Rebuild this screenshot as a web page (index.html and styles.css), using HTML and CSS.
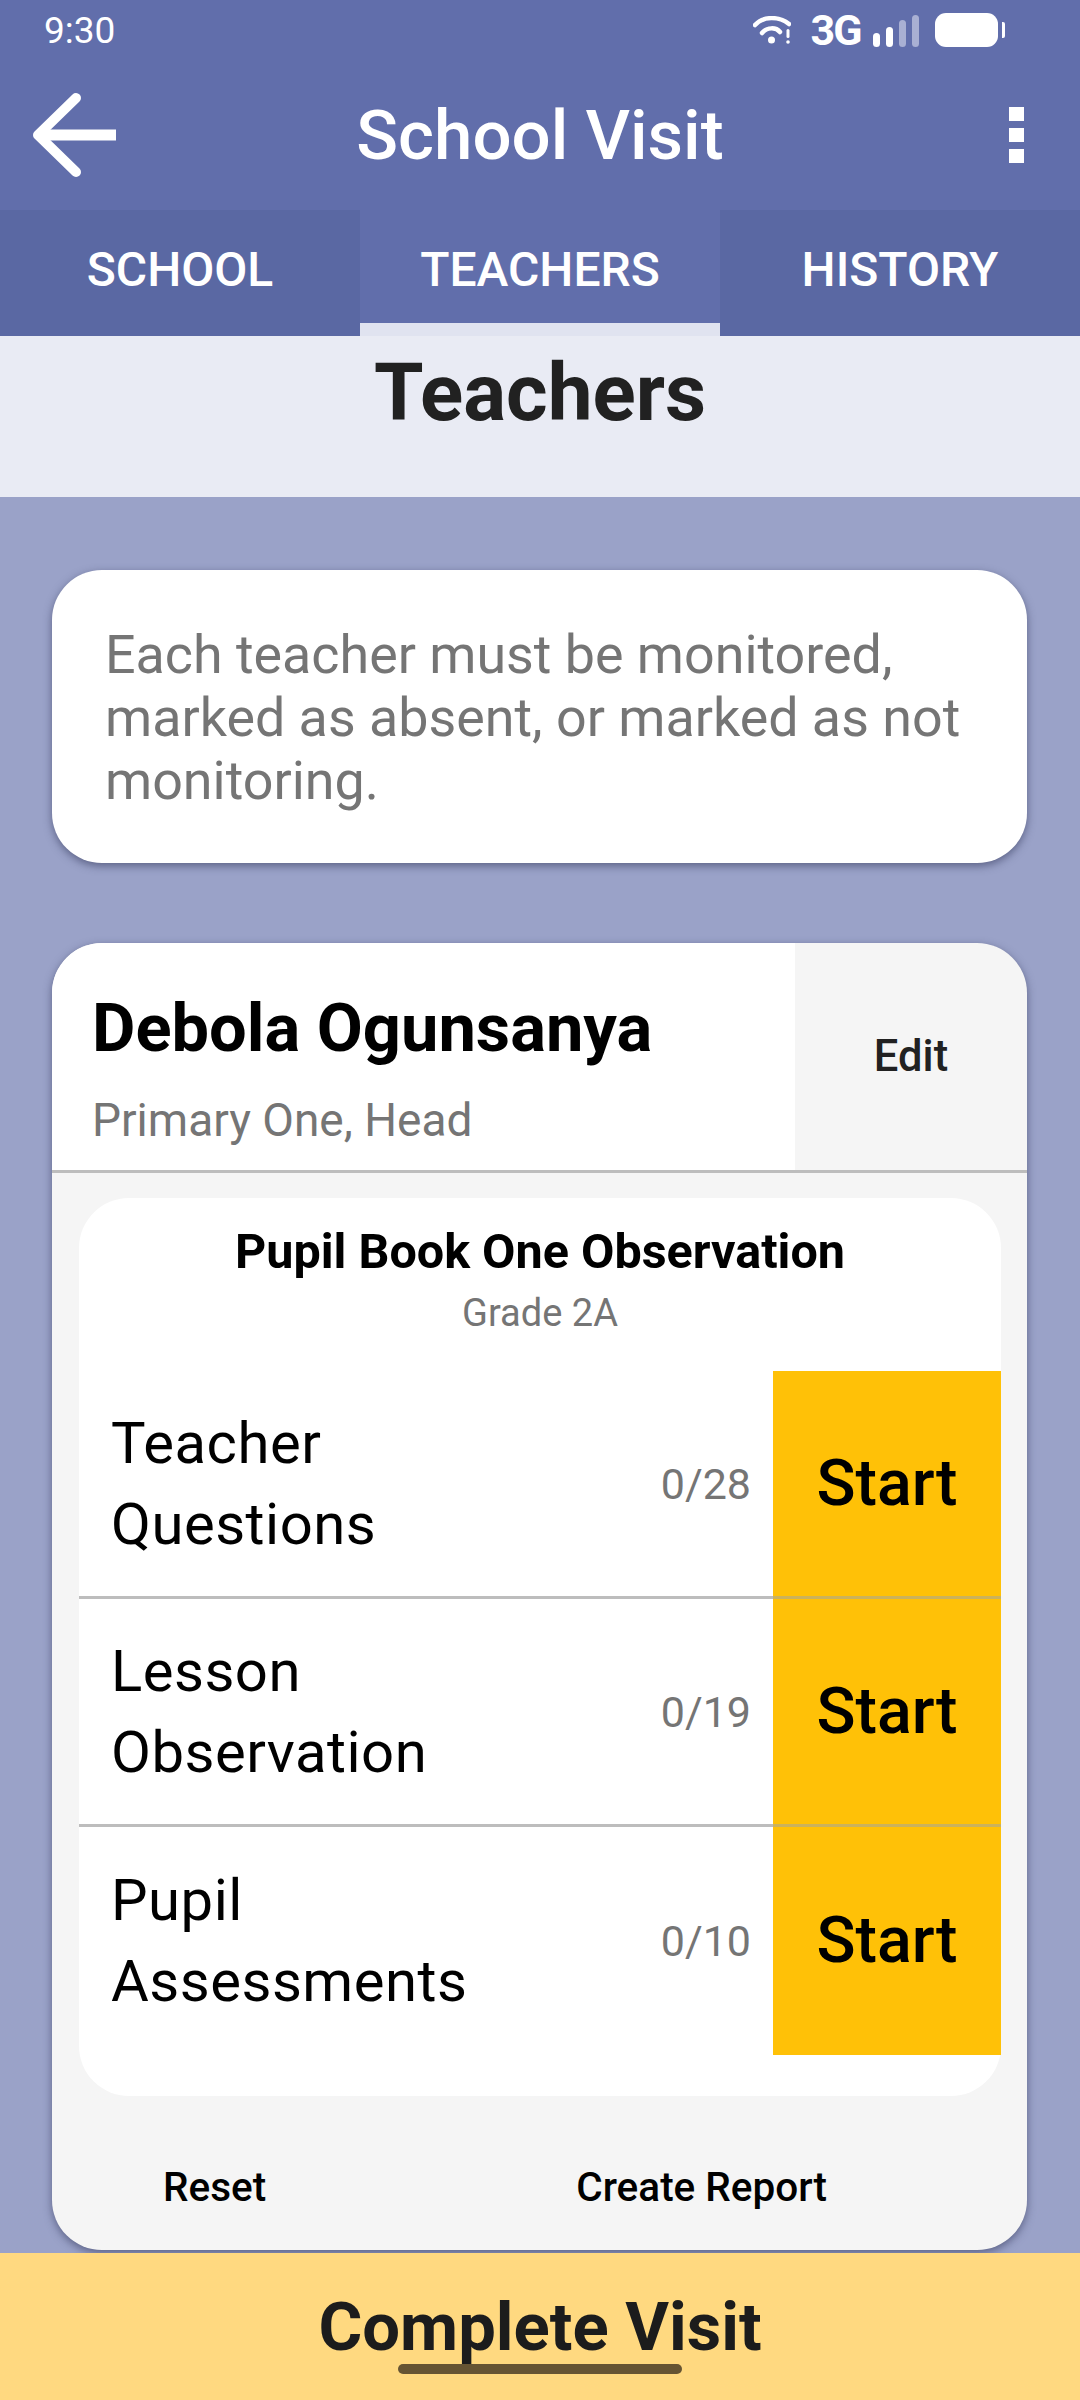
FILE: index.html
```html
<!DOCTYPE html>
<html lang="en">
<head>
    <meta charset="UTF-8">
    <meta name="viewport" content="width=device-width, initial-scale=1.0">
    <title>School Visit</title>
    <link rel="stylesheet" href="styles.css">
</head>
<body>
    <div class="top-bars">
        <div class="status-bar">
            <span class="clock">9:30</span>
            <div class="status-icons">
                <svg class="wifi" width="38" height="28" viewBox="0 0 38 28">
                    <path d="M2 9 C10 0 26 0 36 8" fill="none" stroke="#fff" stroke-width="4.5" stroke-linecap="round"/>
                    <path d="M9 17 C14 11 23 11 27 16" fill="none" stroke="#fff" stroke-width="4.5" stroke-linecap="round"/>
                    <circle cx="18.5" cy="24" r="3.5" fill="#fff"/>
                    <rect x="33.5" y="13" width="3" height="9" rx="1.5" fill="#fff"/>
                    <circle cx="35" cy="26" r="1.8" fill="#fff"/>
                </svg>
                <span class="network">3G</span>
                <div class="signal">
                    <span class="bar bar-1"></span>
                    <span class="bar bar-2"></span>
                    <span class="bar bar-3 off"></span>
                    <span class="bar bar-4 off"></span>
                </div>
                <div class="battery"><span class="battery-body"></span><span class="battery-nub"></span></div>
            </div>
        </div>

        <div class="app-bar">
            <svg class="back" width="92" height="86" viewBox="0 0 92 86">
                <path d="M48 6 L10 43 L48 80" fill="none" stroke="#fff" stroke-width="10" stroke-linecap="round" stroke-linejoin="round"/>
                <path d="M10 43 H88" fill="none" stroke="#fff" stroke-width="11"/>
            </svg>
            <h1 class="app-title">School Visit</h1>
            <div class="more"><span></span><span></span><span></span></div>
        </div>

        <div class="tabs">
            <div class="tab">SCHOOL</div>
            <div class="tab active">TEACHERS</div>
            <div class="tab">HISTORY</div>
        </div>
    </div>

    <div class="page-head">
        <h2 class="page-title">Teachers</h2>
    </div>

    <main class="content">
        <div class="note">Each teacher must be monitored, marked as absent, or marked as not monitoring.</div>

        <section class="teacher">
            <div class="teacher-head">
                <div class="teacher-info">
                    <div class="teacher-name">Debola Ogunsanya</div>
                    <div class="teacher-role">Primary One, Head</div>
                </div>
                <div class="edit-btn">Edit</div>
            </div>

            <div class="observation">
                <div class="obs-title">Pupil Book One Observation</div>
                <div class="obs-grade">Grade 2A</div>

                <div class="task">
                    <div class="task-name">Teacher<br>Questions</div>
                    <div class="task-count">0/28</div>
                    <div class="start-btn">Start</div>
                </div>
                <div class="task">
                    <div class="task-name">Lesson<br>Observation</div>
                    <div class="task-count">0/19</div>
                    <div class="start-btn">Start</div>
                </div>
                <div class="task">
                    <div class="task-name">Pupil<br>Assessments</div>
                    <div class="task-count">0/10</div>
                    <div class="start-btn">Start</div>
                </div>
            </div>

            <div class="teacher-actions">
                <span class="action action-reset">Reset</span>
                <span class="action action-report">Create Report</span>
            </div>
        </section>
    </main>

    <footer class="complete-bar">
        <span class="complete-label">Complete Visit</span>
        <span class="home-pill"></span>
    </footer>
</body>
</html>
```

FILE: styles.css
```css
* {
    box-sizing: border-box;
    margin: 0;
    padding: 0;
}

body {
    width: 1080px;
    height: 2400px;
    overflow: hidden;
    display: flex;
    flex-direction: column;
    background: #9aa2c8;
    font-family: "Roboto", "Liberation Sans", sans-serif;
}

.top-bars {
    background: #616eab;
    color: #ffffff;
}

/* Status bar */
.status-bar {
    height: 60px;
    padding: 0 75px 0 44px;
    display: flex;
    align-items: center;
    justify-content: space-between;
}

.clock {
    font-size: 37px;
}

.status-icons {
    display: flex;
    align-items: center;
}

.network {
    margin-left: 20px;
    font-size: 43px;
    font-weight: 700;
    letter-spacing: -2px;
    line-height: 1;
    width: 46px;
}

.signal {
    margin-left: 16px;
    margin-top: 2px;
    display: flex;
    align-items: flex-end;
    gap: 5.5px;
    height: 32px;
}

.bar {
    width: 7.5px;
    border-radius: 4px;
    background: #ffffff;
}

.bar.off {
    background: #a9b0d3;
}

.bar-1 { height: 14px; }
.bar-2 { height: 20px; }
.bar-3 { height: 27px; }
.bar-4 { height: 32px; }

.battery {
    margin-left: 16px;
    display: flex;
    align-items: center;
    gap: 4px;
}

.battery-body {
    width: 63px;
    height: 34px;
    border-radius: 11px;
    background: #ffffff;
}

.battery-nub {
    width: 3px;
    height: 16px;
    border-radius: 0 2px 2px 0;
    background: #ffffff;
}

/* App bar */
.app-bar {
    height: 150px;
    padding: 0 56px 0 28px;
    display: flex;
    align-items: center;
    justify-content: space-between;
    position: relative;
}

.back {
    flex: none;
}

.app-title {
    position: absolute;
    left: 0;
    right: 0;
    text-align: center;
    font-size: 69px;
    font-weight: 500;
}

.more {
    display: flex;
    flex-direction: column;
    gap: 7px;
}

.more span {
    width: 15px;
    height: 14px;
    background: #ffffff;
}

/* Tabs */
.tabs {
    display: flex;
    height: 126px;
}

.tab {
    flex: 1;
    display: flex;
    align-items: center;
    justify-content: center;
    padding-bottom: 8px;
    background: #5a68a3;
    font-size: 48px;
    font-weight: 500;
}

.tab.active {
    background: #616eab;
    border-bottom: 13px solid #e0e3f0;
    padding-top: 6px;
    padding-bottom: 0;
}

/* Heading under the tabs */
.page-head {
    height: 161px;
    padding-top: 12px;
    background: #e9ebf4;
    text-align: center;
}

.page-title {
    font-size: 80px;
    font-weight: 700;
    color: #212121;
    line-height: 90px;
}

.content {
    flex: 1;
    min-height: 0;
    padding: 73px 53px 0 52px;
}

.note {
    height: 293px;
    padding: 53px 40px 0 53px;
    background: #ffffff;
    border-radius: 50px;
    box-shadow: 0 3px 8px rgba(50, 55, 90, 0.6);
    color: #757575;
    font-size: 53.8px;
    line-height: 63px;
}

/* Teacher card */
.teacher {
    margin-top: 80px;
    height: 1307px;
    background: #f5f5f5;
    border-radius: 50px;
    overflow: hidden;
    box-shadow: 0 3px 8px rgba(50, 55, 90, 0.6);
}

.teacher-head {
    display: flex;
    height: 230px;
    border-bottom: 3px solid #bdbdbd;
}

.teacher-info {
    flex: 1;
    padding: 50px 0 0 40px;
    background: #ffffff;
}

.teacher-name {
    font-size: 66.8px;
    font-weight: 700;
    line-height: 70px;
    color: #000000;
}

.teacher-role {
    margin-top: 31px;
    font-size: 46px;
    line-height: 52px;
    color: #757575;
}

.edit-btn {
    width: 232px;
    display: flex;
    align-items: center;
    justify-content: center;
    font-size: 43.5px;
    font-weight: 500;
    color: #212121;
}

.observation {
    margin: 25px 26px 0 27px;
    height: 898px;
    padding-top: 27px;
    background: #ffffff;
    border-radius: 50px;
}

.obs-title {
    text-align: center;
    font-size: 48.5px;
    font-weight: 700;
    line-height: 54px;
    color: #000000;
}

.obs-grade {
    margin-top: 14px;
    margin-bottom: 38px;
    text-align: center;
    font-size: 38px;
    line-height: 40px;
    color: #757575;
}

.task {
    display: flex;
    align-items: center;
    height: 228px;
    border-bottom: 3px solid #bdbdbd;
}

.task:last-child {
    border-bottom: 0;
}

.task-name {
    flex: 1;
    padding-left: 32px;
    font-size: 58px;
    line-height: 81px;
    letter-spacing: 0.5px;
    color: #000000;
}

.task-count {
    margin-right: 22px;
    font-size: 43px;
    color: #757575;
}

.start-btn {
    width: 228px;
    height: 228px;
    display: flex;
    align-items: center;
    justify-content: center;
    align-self: flex-start;
    padding-bottom: 2px;
    background: #ffc107;
    border-bottom: 3px solid #cbb25c;
    font-size: 64.5px;
    font-weight: 500;
    color: #000000;
}

.task:last-child .start-btn {
    border-bottom: 0;
}

.teacher-actions {
    display: flex;
    padding-top: 67px;
    font-size: 40.5px;
    font-weight: 500;
    color: #000000;
}

.action-reset {
    margin-left: 111px;
}

.action-report {
    margin-left: 310px;
}

/* Bottom button */
.complete-bar {
    height: 147px;
    position: relative;
    display: flex;
    justify-content: center;
    padding-top: 35px;
    background: #ffd980;
}

.complete-label {
    font-size: 67px;
    font-weight: 700;
    line-height: 78px;
    color: #1c1c1c;
}

.home-pill {
    position: absolute;
    left: 398px;
    top: 111px;
    width: 284px;
    height: 10px;
    border-radius: 5px;
    background: #665433;
}
```
